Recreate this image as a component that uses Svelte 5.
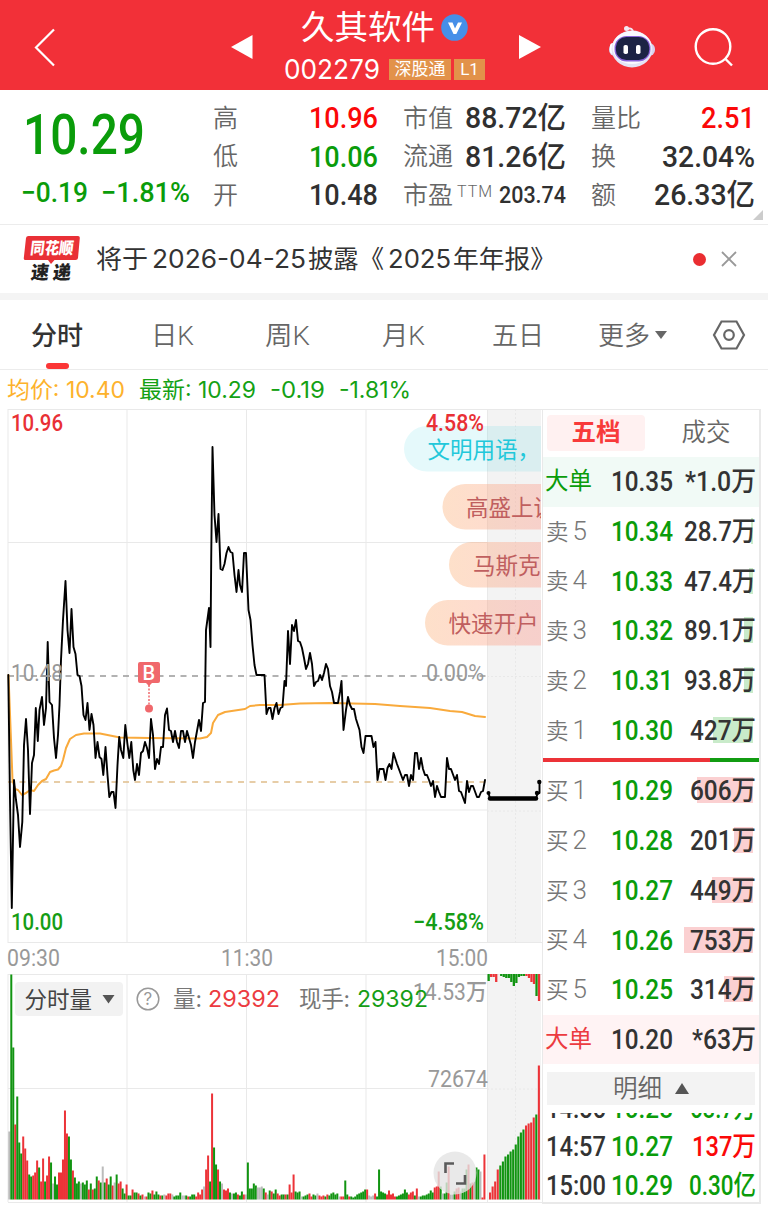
<script lang="ts">
  const stats = [
    [
      { label: '高', value: '10.96', w: 69, tone: 'red' },
      { label: '低', value: '10.06', w: 69, tone: 'green' },
      { label: '开', value: '10.48', w: 69, tone: 'dark' },
    ],
    [
      { label: '市值', value: '88.72亿', w: 101, tone: 'dark' },
      { label: '流通', value: '81.26亿', w: 101, tone: 'dark' },
      { label: '市盈', sup: 'TTM', value: '203.74', w: 67, tone: 'dark small' },
    ],
    [
      { label: '量比', value: '2.51', w: 54, tone: 'red' },
      { label: '换', value: '32.04%', w: 93, tone: 'dark' },
      { label: '额', value: '26.33亿', w: 101, tone: 'dark' },
    ],
  ];

  const sells = [
    { n: 5, price: '10.34', vol: '28.7万', w: 72, bar: 2 },
    { n: 4, price: '10.33', vol: '47.4万', w: 72, bar: 4 },
    { n: 3, price: '10.32', vol: '89.1万', w: 72, bar: 9 },
    { n: 2, price: '10.31', vol: '93.8万', w: 72, bar: 9 },
    { n: 1, price: '10.30', vol: '427万', w: 66, bar: 40 },
  ];
  const buys = [
    { n: 1, price: '10.29', vol: '606万', w: 66, bar: 56 },
    { n: 2, price: '10.28', vol: '201万', w: 66, bar: 19 },
    { n: 3, price: '10.27', vol: '449万', w: 66, bar: 41 },
    { n: 4, price: '10.26', vol: '753万', w: 66, bar: 69 },
    { n: 5, price: '10.25', vol: '314万', w: 66, bar: 29 },
  ];
  const trades = [
    { time: '14:56', price: '10.28', vol: '68.7万', w: 66, tone: 'green' },
    { time: '14:57', price: '10.27', vol: '137万', w: 64, tone: 'red' },
    { time: '15:00', price: '10.29', vol: '0.30亿', w: 67, tone: 'green' },
  ];

  const price =
    '8.3,675 10,800 11.8,908 14,780 16,800 18,815 20,847 22.3,822 24,745 26,719 28,750 30,814 32,763 34,755 35.8,708 37.8,741 39.5,710 42,697 44,725 46,708 47.7,642 49.5,702 52,705 54,738 56,758 58,735 59.5,705 61,660 63,620 65.5,581 67.5,630 69.5,653 71.5,609 73.5,647 75.5,654 77.5,675 79.5,676 81.5,686 83.5,715 85.5,720 87.5,703 89.5,730 91.5,714 93.5,725 95.5,758 97.5,742 99.5,757 101.5,759 103.3,775 105.5,747 107.5,775 109.3,797 111.5,792 113.5,792 115.5,808 117.5,765 119.2,737 121,750 123.3,758 125.3,725 127.3,743 129.3,758 131.3,742 133.3,770 135,780 137,764 139,775 141,753 143,751 145,742 147,748 149,758 151,719 153,735 155,769 157,759 159,764 161,747 163,747 165,715 167,708.5 169,730 171,731 173,742 175,731 177,742 179,748 181,731 183,731 185,742 187,731 189,738 191,745 193,758 195,742 197,731 199,720 201,731 203,703 205,702 206,630 209,608 210.5,647 211.2,560 212.5,447 214.5,515 216.5,542 218.5,514 220.5,569 222.5,570 224.5,564 226.5,553 228.5,547 230.5,552 232.5,553 234.5,575 236.5,592 238.5,570 240,585 242,592 244,553 246,553 248.5,610 250.5,620 252.5,645 254.5,665 256.5,675 264.5,675 266.5,714 268.5,708 270.5,708 272.5,719 274.5,708 276.5,703 278.5,714 280.5,708 282.5,707 284.5,681 286,686 288,631 290,664 292,625 294,631 296,620 298,641 300,642 302,648 304,658 306,669 308,664 310,653 312,664 314,686 316,682 318,681 320,675 322,680 324,673 326,664 328,669 330,686 332,692 334,703 338,703 340,692 341.5,681 343.5,730 346,710 348,697 350,705 352,709 354,709 356,719 359.5,730 361.5,747 363.5,753 365.5,736 371.5,736 373.5,747 375.5,742 377.5,780 379.5,769 383.5,769 385.5,780 387.5,768 389.5,764 391.5,769 393.5,753 397,764 403,780 405,775 407,775 409,786 411,775 413,780 415,753 417,753 419,769 421,758 423,769 425,775 427,775 429,780 431,786 433,781 435,797 437,786 439,792 441,797 445,797 447,758 449,769 451,769 455,780 457,775 459,791 461,792 465,803 467,781 469,792 471,786 473,786 477,797 479,797 481,792 483,791 485,780';
  const average =
    '8.5,675 11,740 12.5,780 15,789 18,790 22,795 26,793 30,790 34,791 38,785 42,781 46,779 50,772 54,770.5 58,769.5 61,766 63,760 66,748 70,739 76,735 84,733.5 100,733.5 110,735.5 120,737.5 150,738 200,738.5 207,737 211,733 213,723 218,715 225,712 245,709 250,706 260,705 280,705 300,703.5 330,703 375,704 400,706 430,708 450,711 462,712 475,716 485,717';

  // one entry per minute: r = up, g = down, x = flat, then the height
  const parse = (s: string) => s.split(' ').map(v => ({ c: v[0], h: +v.slice(1) }));
  const volume = parse(
    'x68 g225 g152 r75 g103 g57 g46 r63 r51 r39 g25 g23 r24 r27 r39 g32 r18 r41 g18 r24 r43 g37 x16 g23 g15 r27 r27 r40 r89 r66 g63 g40 r29 g22 g16 g18 x16 g17 g15 g19 r10 g16 r10 g11 g23 r19 g17 x33 g17 r21 g15 g23 r14 x17 g25 r16 r18 g11 g6 r15 g4 g4 r10 g7 g7 r6 g4 r5 x3 r3 g7 g6 r9 g5 g8 g5 r4 g4 x5 r4 r6 r6 x5 g3 g4 g4 g7 x4 x4 g4 r3 g3 g5 g5 r3 r7 r5 r10 x13 r30 r44 g18 r106 g52 g35 r30 g18 x16 r10 r9 r11 g7 x6 g6 g7 r5 g4 g8 r5 x5 ' +
      'g37 g11 g11 g16 g14 x12 x12 x13 g11 r7 x5 g9 r8 g6 g10 r6 r4 g5 g5 r5 g5 r15 r7 r25 g8 g7 g8 x3 g3 g4 g5 r6 r3 g5 g4 x6 r4 r3 r4 g3 r5 g4 g6 g7 g5 g6 x3 r3 r3 g19 g5 r3 g3 g2 g3 g5 g6 g7 g8 g10 r10 x4 x3 x4 r6 g3 g30 g8 g7 g6 r5 r9 r5 r6 r3 g3 g4 g5 g6 g10 g7 r5 r7 r8 g4 r11 x3 g3 g4 g4 g5 g6 g9 g7 r12 r13 r28 g13 x6 g6 g17 r33 x5 x5 g8 r11 r12 x8 g11 g11 g30 r35 g16 r17 x18 g32 g30 x28 r2 r45'
  );
  const auction = parse('r7 r13 r18 r30 g34 g38 g43 g45 g48 g50 g55 g63 g67 g70 r74 r76 r77 r82 g85 r134');
  const auctionTop = parse('g7 r3 r3 r8 x0 g2 g3 g4 g4 g8 g12 g9 g3 g2 g2 r2 r4 r8 r10 g22 r27');

  const pills = [
    { x: 404, y: 426, tx: 427.5, text: '文明用语，', cls: 'cyan' },
    { x: 442.5, y: 484, tx: 466, text: '高盛上调', cls: 'warm' },
    { x: 449, y: 542, tx: 473, text: '马斯克', cls: 'warm' },
    { x: 425, y: 600, tx: 448.5, text: '快速开户', cls: 'warm' },
  ];

  const labels = [
    { x: 11, y: 431, w: 52, text: '10.96', cls: 'up' },
    { x: 11, y: 930, w: 52, text: '10.00', cls: 'down' },
    { x: 11, y: 681, w: 52, text: '10.48', cls: 'soft' },
    { x: 426, y: 431, w: 58, text: '4.58%', cls: 'up' },
    { x: 413, y: 930, w: 71, text: '−4.58%', cls: 'down' },
    { x: 426, y: 681, w: 58, text: '0.00%', cls: 'soft' },
    { x: 7, y: 966, w: 53, text: '09:30', cls: 'soft' },
    { x: 221, y: 966, w: 52, text: '11:30', cls: 'soft' },
    { x: 436, y: 966, w: 52, text: '15:00', cls: 'soft' },
    { x: 413, y: 1000, w: 74, text: '14.53万', cls: 'soft' },
    { x: 428, y: 1087, w: 60, text: '72674', cls: 'soft' },
  ];
</script>

{#snippet fit(text: string, width: number)}
  <svg class="fit" {width}>
    <text y="0.855em" textLength={width} lengthAdjust="spacingAndGlyphs">{text}</text>
  </svg>
{/snippet}

{#snippet level(side: string, row: any)}
  <div class="level">
    <div class="name">{side}<i>{row.n}</i></div>
    <div class="green">{@render fit(row.price, 62)}</div>
    <div class="vol">
      <b class="depth {side === '卖' ? 'sell' : 'buy'}" style="width: {row.bar}px"></b>
      {@render fit(row.vol, row.w)}
    </div>
  </div>
{/snippet}

<div class="app">
  <header>
    <svg class="back" width="24" height="42" viewBox="33 27 24 42">
      <path d="M54 29.500L36 47.500L54 65.500" />
    </svg>
    <svg class="prev" width="22" height="24" viewBox="0 0 22 24"><path d="M0 12L21.500 0V24Z" /></svg>
    <div class="stock">
      <div class="title">
        <span>久其软件</span>
        <svg width="27" height="27" viewBox="0 0 27 27">
          <circle cx="13.500" cy="13.500" r="13.300" fill="#468fe8" />
          <path d="M7 8.500H11.500L14 14.500L17 8.500H21L15.300 20H12.500Z" fill="#fff" />
        </svg>
      </div>
      <div class="code">
        {@render fit('002279', 96)}
        <span class="tag wide">深股通</span>
        <span class="tag">L1</span>
      </div>
    </div>
    <svg class="next" width="22" height="24" viewBox="0 0 22 24"><path d="M22 12L0 0V24Z" /></svg>
    <svg class="robot" width="48" height="44" viewBox="608 25 48 44">
      <path d="M627 29Q633 27 633 33" fill="none" stroke="#f2e8f3" stroke-width="2" />
      <circle cx="626.500" cy="28.500" r="2.500" fill="#f4e9f2" />
      <rect x="609" y="43" width="46" height="13" rx="6" fill="#d8d0ee" />
      <rect x="610" y="43" width="6" height="11" rx="3" fill="#fff" />
      <ellipse cx="632" cy="49" rx="20.500" ry="18.500" fill="#e4e3f5" />
      <ellipse cx="632" cy="47.500" rx="19.500" ry="16.500" fill="#faf9ff" />
      <rect x="614.500" y="36" width="36" height="25.500" rx="12" fill="#8963d8" />
      <rect x="615.800" y="37" width="33.500" height="23" rx="10.500" fill="#1c2344" />
      <rect x="623.500" y="45" width="4.500" height="9" rx="1.800" fill="#fff" />
      <rect x="636" y="45" width="4.500" height="9" rx="1.800" fill="#fff" />
    </svg>
    <svg class="search" width="42" height="42" viewBox="693 26 42 42">
      <circle cx="713" cy="46.500" r="17.300" />
      <path d="M725 58.500L732 65.500" />
    </svg>
  </header>

  <section class="quote">
    <div class="last green">
      <div class="big">{@render fit('10.29', 122)}</div>
      <div class="change">
        {@render fit('−0.19', 67)}
        {@render fit('−1.81%', 89)}
      </div>
    </div>
    {#each stats as group}
      <div class="group">
        {#each group as s}
          <div class="stat">
            <span class="label">{s.label}{#if s.sup}<sup>{s.sup}</sup>{/if}</span>
            <div class={s.tone}>{@render fit(s.value, s.w)}</div>
          </div>
        {/each}
      </div>
    {/each}
    <i class="corner"></i>
  </section>

  <section class="news">
    <svg width="58" height="50" viewBox="23 233 58 50">
      <path d="M28.500 235H78Q80 235 79.800 237L78 257Q77.800 259 75.500 259H54.500L51 263L48 259H25.500Q23.500 259 23.800 257L26 237Q26.300 235 28.500 235Z" fill="#e93036" />
      <g transform="skewX(-7)" class="logo">
        <text x="61" y="253.500" fill="#fff" textLength="43" lengthAdjust="spacingAndGlyphs">同花顺</text>
        <text x="64.500" y="278.500" class="express" textLength="18" lengthAdjust="spacingAndGlyphs">速</text>
        <text x="86.500" y="278.500" class="express" textLength="18" lengthAdjust="spacingAndGlyphs">递</text>
      </g>
    </svg>
    <div class="headline">
      {@render fit('将于', 52)}
      {@render fit('2026-04-25', 154)}
      {@render fit('披露《', 76)}
      {@render fit('2025', 63)}
      {@render fit('年年报》', 103)}
    </div>
    <i class="dot"></i>
    <svg class="close" width="16" height="16" viewBox="0 0 16 16"><path d="M1 1L15 15M15 1L1 15" /></svg>
  </section>

  <nav>
    <div class="tab active">分时</div>
    <div class="tab">{@render fit('日K', 43)}</div>
    <div class="tab">{@render fit('周K', 45)}</div>
    <div class="tab">{@render fit('月K', 43)}</div>
    <div class="tab">五日</div>
    <div class="tab">更多<svg class="caret" width="12" height="8" viewBox="0 0 12 8"><path d="M0 0H12L6 8Z" /></svg></div>
    <svg class="gear" width="34" height="32" viewBox="0 0 34 32">
      <path d="M9.500 2.500H24.500L32 16L24.500 29.500H9.500L2 16Z" />
      <circle cx="17" cy="16" r="4.800" />
    </svg>
  </nav>

  <div class="summary">
    <span class="amber">{@render fit('均价: 10.40', 118)}</span>
    {@render fit('最新: 10.29', 117)}
    {@render fit('-0.19', 55)}
    {@render fit('-1.81%', 72)}
  </div>

  <main>
    <svg class="chart" width="542" height="810" viewBox="0 408 542 810">
      <defs>
        <linearGradient id="warm">
          <stop offset="0" stop-color="#fba96b" stop-opacity="0.36" />
          <stop offset="0.6" stop-color="#fd9184" stop-opacity="0.36" />
        </linearGradient>
        <clipPath id="plot"><rect x="8" y="408" width="533" height="800" /></clipPath>
      </defs>

      <rect x="487" y="409" width="54" height="534" fill="#f3f3f3" />
      <rect x="487" y="974" width="54" height="226" fill="#f3f3f3" />
      <g class="grid">
        <path d="M8 409.500H542M8 542.500H487M8 810H487M8 942.500H542M8 409V943M127 409V943M246.500 409V943M366 409V943M487.500 409V943" />
        <path d="M8 974.500H542M8 1088.500H487M8 1202.500H542M8 974V1202M127 974V1202M246.500 974V1202M366 974V1202M487.500 974V1202" />
        <path class="dots" d="M515.500 409V943M515.500 974V1199M487 676.500H541M487 811H541M487 1089H541" />
      </g>

      <g clip-path="url(#plot)">
        {#each pills as p}
          <rect x={p.x} y={p.y} width="180" height="45.500" rx="22.700" class={p.cls} />
          <text x={p.tx} y={p.y + 32} class="pill {p.cls}-text">{p.text}</text>
        {/each}
      </g>

      <path class="dash" d="M8 676H487" />
      <path class="dash gold" d="M8 782H487" />
      <polyline points={average} class="average" />
      <polyline points={price} class="price" />
      <path d="M488.500 793L490 798.500H536L537.500 793.500L539.500 793V782" class="price" />
      <path d="M490 798.500H536" stroke="#000" stroke-width="4.500" stroke-linecap="round" />
      <circle cx="488.500" cy="793" r="2" /><circle cx="537" cy="793" r="2.200" /><circle cx="539.300" cy="782" r="2.200" />

      <g class="mark">
        <path d="M140 662H158Q160 662 160 664V681Q160 683 158 683H152L149 686L146 683H140Q138 683 138 681V664Q138 662 140 662Z" />
        <path d="M149 685V706" stroke="#f0686c" stroke-width="1.500" stroke-dasharray="2 1.500" />
        <circle cx="149" cy="708.500" r="4" />
        <text x="142.500" y="679.500">B</text>
      </g>

      {#each volume as v, i}
        <rect x={8.3 + i * 1.988} y={1199.5 - v.h} width="2" height={v.h} class="bar-{v.c}" />
      {/each}
      {#each auction as v, i}
        <rect x={489 + i * 2.57} y={1199.5 - v.h} width="2.100" height={v.h} class="bar-{v.c}" />
      {/each}
      {#each auctionTop as v, i}
        <rect x={487.5 + i * 2.52} y="974" width="2.300" height={v.h} class="bar-{v.c}" />
      {/each}

      {#each labels as l}
        <text x={l.x} y={l.y} textLength={l.w} lengthAdjust="spacingAndGlyphs" class="scale {l.cls}">{l.text}</text>
      {/each}

      <rect x="15" y="982" width="108" height="34" rx="4" fill="#f2f2f2" />
      <text x="24.500" y="1008" class="vol-text" fill="#444">分时量</text>
      <path d="M102.500 995H114.500L108.500 1003.500Z" fill="#555" />
      <circle cx="148" cy="999" r="10.800" fill="none" stroke="#999" stroke-width="1.500" />
      <text x="143.500" y="1005" class="vol-text help" fill="#999">?</text>
      <text x="173" y="1007" class="vol-text" fill="#777" textLength="29">量:</text>
      <text x="208" y="1007" class="vol-text" fill="#ec3b40" textLength="72" lengthAdjust="spacingAndGlyphs">29392</text>
      <text x="299" y="1007" class="vol-text" fill="#777" textLength="51">现手:</text>
      <text x="357" y="1007" class="vol-text" fill="#159d15" textLength="71" lengthAdjust="spacingAndGlyphs">29392</text>

      <circle cx="455" cy="1173" r="21.500" fill="#e3e3e3" fill-opacity="0.8" />
      <path d="M445.500 1173V1163.500H454M456 1183.500H465V1175" fill="none" stroke="#5b5b5b" stroke-width="2.600" />
    </svg>

    <aside>
      <div class="book-tabs">
        <div class="on">五档</div>
        <div>成交</div>
      </div>
      <div class="level large sell-large">
        <div class="green">大单</div>
        <div>{@render fit('10.35', 62)}</div>
        <div class="vol">{@render fit('*1.0万', 71)}</div>
      </div>
      {#each sells as row}{@render level('卖', row)}{/each}
      <div class="ratio"></div>
      {#each buys as row}{@render level('买', row)}{/each}
      <div class="level large buy-large">
        <div class="rose">大单</div>
        <div>{@render fit('10.20', 62)}</div>
        <div class="vol">{@render fit('*63万', 64)}</div>
      </div>
      <div class="detail">明细<svg width="14" height="11" viewBox="0 0 14 11"><path d="M0 11L7 0L14 11Z" /></svg></div>
      <div class="trades">
        {#each trades as t}
          <div class="trade">
            <div>{@render fit(t.time, 60)}</div>
            <div class="green">{@render fit(t.price, 62)}</div>
            <div class="vol {t.tone}">{@render fit(t.vol, t.w)}</div>
          </div>
        {/each}
      </div>
    </aside>
  </main>
</div>

<style>
  :global(body) {
    background: #fff;
  }
  .app {
    width: 768px;
    height: 1218px;
    overflow: hidden;
    color: #333;
    font-family: Roboto, 'Noto Sans CJK SC', sans-serif;
    line-height: 1;
  }
  svg {
    flex: none;
  }
  .fit {
    display: block;
    height: 1em;
    overflow: visible;
    fill: currentColor;
  }
  .green {
    color: #0a9c0a;
  }
  .red {
    color: #fb0808;
  }
  .rose {
    color: #ec3b40;
  }
  .dark {
    color: #303030;
  }

  header {
    display: flex;
    align-items: flex-start;
    box-sizing: border-box;
    height: 90px;
    padding-left: 33px;
    background: #f23038;
    color: #fff;
  }
  .back {
    margin-top: 27px;
    fill: none;
    stroke: #fff;
    stroke-width: 2.2;
  }
  .prev {
    margin: 35px 0 0 174px;
    fill: #fff;
  }
  .stock {
    width: 201px;
    margin: 12px 33px 0 32px;
  }
  .title {
    display: flex;
    align-items: center;
    height: 31px;
    margin-left: 16px;
    gap: 6px;
    font-size: 33.5px;
  }
  .code {
    display: flex;
    align-items: center;
    margin: 13px 0 0 -1px;
    font-family: Inter, sans-serif;
    font-size: 26.5px;
  }
  .tag {
    box-sizing: border-box;
    width: 31px;
    height: 21px;
    margin-left: 3px;
    background: #e2924a;
    font-family: Roboto, 'Noto Sans CJK SC', sans-serif;
    font-size: 17px;
    line-height: 20px;
    text-align: center;
    white-space: nowrap;
  }
  .tag.wide {
    width: 62px;
    margin-left: 9px;
  }
  .next {
    margin-top: 35px;
    fill: #fff;
  }
  .robot {
    margin: 25px 0 0 67px;
  }
  .search {
    margin: 26px 0 0 37px;
    fill: none;
    stroke: #fff;
    stroke-width: 2.4;
  }

  .quote {
    position: relative;
    display: grid;
    grid-template-columns: 168px 164px 163px 164px;
    column-gap: 25px;
    box-sizing: border-box;
    height: 135px;
    padding-left: 21px;
    border-bottom: 1px solid #ececec;
  }
  .big {
    margin: 17px 0 0 2px;
    font-size: 55px;
    font-weight: 500;
  }
  .change {
    display: flex;
    gap: 13px;
    margin-top: 16px;
    font-size: 27.5px;
    font-weight: 500;
  }
  .group {
    display: flex;
    flex-direction: column;
    padding-top: 8px;
  }
  .quote .group:nth-child(2) {
    margin-left: -1px;
  }
  .stat {
    display: flex;
    align-items: center;
    justify-content: space-between;
    height: 38.5px;
    font-size: 30px;
    font-weight: 500;
  }
  .label {
    display: flex;
    padding-top: 2px;
    font-size: 25px;
    font-weight: 350;
    color: #666;
  }
  sup {
    margin: 1px 0 0 4px;
    font-size: 16px;
    letter-spacing: 1px;
  }
  .small {
    font-size: 24.5px;
  }
  .corner {
    position: absolute;
    right: 5px;
    bottom: 4px;
    border: 5px solid #ccc;
    border-top-color: transparent;
    border-left-color: transparent;
  }

  .news {
    display: flex;
    align-items: center;
    height: 68px;
    padding-left: 23px;
    border-bottom: 7px solid #f4f4f4;
  }
  .logo {
    font-family: 'Noto Sans CJK SC', sans-serif;
    font-size: 16.5px;
    font-weight: 900;
  }
  .express {
    fill: #222;
    font-size: 18.5px;
  }
  .headline {
    display: flex;
    width: 612px;
    margin-left: 15px;
    font-family: Inter, 'Noto Sans CJK SC', sans-serif;
    font-size: 25px;
  }
  .headline .fit:nth-child(even) {
    margin: 0 2px 0 4px;
  }
  .dot {
    width: 13px;
    height: 13px;
    margin-left: -15px;
    border-radius: 50%;
    background: #ea2d31;
  }
  .close {
    margin-left: 15px;
    fill: none;
    stroke: #999;
    stroke-width: 1.8;
  }

  nav {
    display: grid;
    grid-template-columns: 120px 114px 117px 110px 106px 113px 34px;
    align-items: center;
    box-sizing: border-box;
    height: 70px;
    padding-left: 32px;
    border-bottom: 1px solid #ececec;
    color: #666;
    font-size: 26px;
    font-weight: 350;
  }
  .tab {
    display: flex;
    align-items: center;
    margin-left: -1px;
    padding-top: 2px;
  }
  .active {
    position: relative;
    color: #333;
    font-weight: 500;
  }
  .active::after {
    content: '';
    position: absolute;
    bottom: -20px;
    left: 15px;
    width: 23px;
    height: 6px;
    border-radius: 3px;
    background: #fb3636;
  }
  .caret {
    margin: -2px 0 0 5px;
    fill: #666;
  }
  .gear {
    fill: none;
    stroke: #666;
    stroke-width: 2.2;
  }

  .summary {
    display: flex;
    align-items: center;
    gap: 14px;
    height: 38px;
    padding: 3px 0 0 7px;
    box-sizing: border-box;
    color: #14a114;
    font-family: Inter, 'Noto Sans CJK SC', sans-serif;
    font-size: 22.5px;
  }
  .amber {
    color: #fdb22c;
  }

  main {
    display: flex;
    align-items: flex-start;
  }
  .chart {
    display: block;
  }
  .grid path {
    fill: none;
    stroke: #e9e9e9;
  }
  .grid .dots {
    stroke: #e8e8e8;
    stroke-dasharray: 2 2;
  }
  .cyan {
    fill: #29d0e0;
    fill-opacity: 0.12;
  }
  .warm {
    fill: url(#warm);
  }
  .pill {
    font-size: 22.5px;
  }
  .cyan-text {
    fill: #22c8da;
  }
  .warm-text {
    fill: #c05f5f;
  }
  .dash {
    stroke: #999;
    stroke-width: 1.3;
    stroke-dasharray: 6 5.5;
  }
  .gold {
    stroke: #e0bd8b;
  }
  .average,
  .price {
    fill: none;
    stroke: #f9aa3c;
    stroke-width: 2;
    stroke-linejoin: round;
    stroke-linecap: round;
  }
  .price {
    stroke: #000;
    stroke-width: 1.9;
  }
  .mark {
    fill: #f0686c;
  }
  .mark text {
    fill: #fff;
    font-size: 20px;
    font-weight: 500;
  }
  .scale {
    font-size: 23px;
    font-weight: 500;
  }
  .up {
    fill: #e93035;
  }
  .down {
    fill: #159d15;
  }
  .soft {
    fill: #999;
    font-weight: 450;
  }
  .vol-text {
    font-family: Inter, 'Noto Sans CJK SC', sans-serif;
    font-size: 22.5px;
  }
  .help {
    font-size: 17px;
  }
  .bar-r {
    fill: #ec3338;
  }
  .bar-g {
    fill: #119411;
  }
  .bar-x {
    fill: #bbb;
  }

  aside {
    box-sizing: border-box;
    width: 219px;
    height: 795px;
    margin-top: 1px;
    overflow: hidden;
    border: 1px solid #e9e9e9;
    border-width: 1px 2px 2px 1px;
  }
  .book-tabs {
    display: flex;
    align-items: center;
    height: 38px;
    padding: 4px 0 5px 4px;
    font-size: 24.5px;
    font-weight: 350;
    color: #666;
  }
  .book-tabs div {
    width: 98px;
    line-height: 36px;
    text-align: center;
  }
  .book-tabs div + div {
    margin-left: 12px;
  }
  .book-tabs .on {
    border-radius: 4px;
    background: #fff1f1;
    color: #f83a3a;
    font-weight: 700;
  }
  .level,
  .trade {
    display: grid;
    grid-template-columns: 65px 62px 1fr;
    align-items: center;
    box-sizing: border-box;
    height: 49.7px;
    padding: 0 3px 1.5px 3px;
    font-size: 27.5px;
    font-weight: 500;
  }
  .large > :first-child {
    margin-left: -1px;
    padding-top: 2px;
    font-size: 23.5px;
    font-weight: 400;
  }
  .sell-large {
    background: #f1faf6;
  }
  .buy-large {
    background: #fff3f4;
  }
  .name {
    color: #777;
    font-size: 22.5px;
    font-weight: 350;
  }
  .name i {
    margin-left: 4px;
    font-size: 26px;
    font-style: normal;
  }
  .vol {
    position: relative;
    justify-self: end;
  }
  .vol .fit {
    position: relative;
  }
  .depth {
    position: absolute;
    top: 1px;
    right: 3px;
    height: 26px;
  }
  .sell {
    background: #c9ebca;
  }
  .buy {
    background: #fbd0d1;
  }
  .ratio {
    width: 168px;
    height: 4px;
    margin: 2.5px 0 4.5px -1px;
    border-right: 50px solid #119c11;
    background: #ec3338;
  }
  .detail {
    display: flex;
    align-items: center;
    justify-content: center;
    gap: 13px;
    width: 208px;
    height: 33px;
    margin: 8px 0 0 4px;
    background: #f3f3f3;
    color: #666;
    font-size: 24.5px;
    font-weight: 350;
  }
  .detail svg {
    fill: #555;
  }
  .trades {
    display: flex;
    flex-direction: column;
    justify-content: flex-end;
    height: 91px;
    margin-top: 8px;
    overflow: hidden;
  }
  .trade {
    flex: none;
    height: 38.5px;
  }
</style>
